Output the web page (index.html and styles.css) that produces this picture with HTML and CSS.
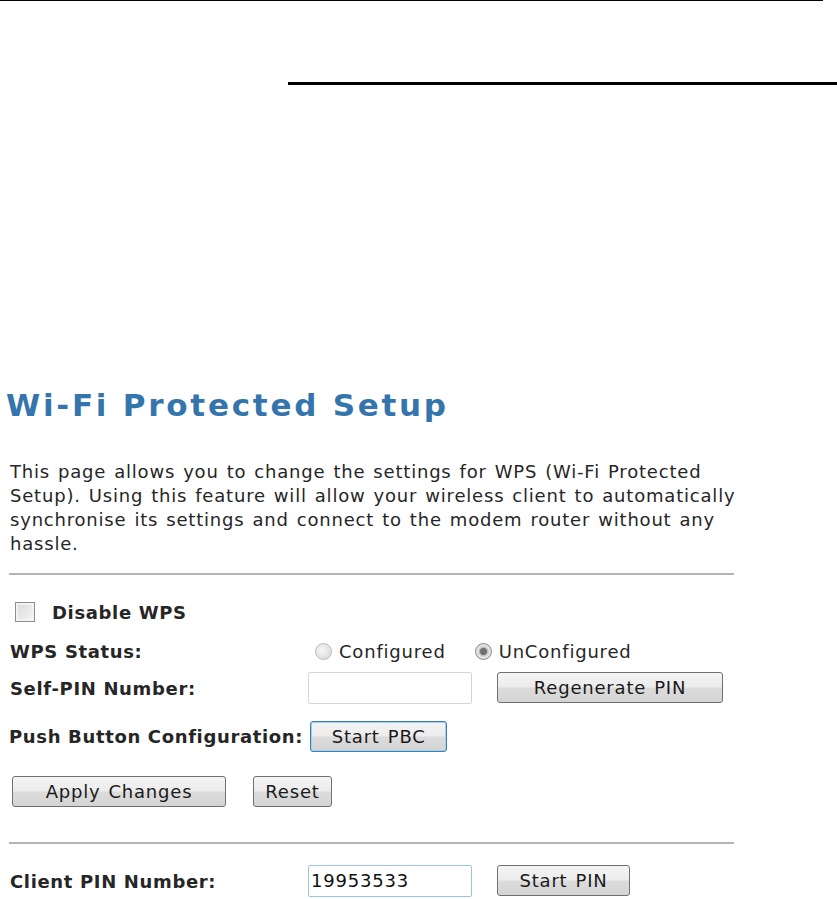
FILE: index.html
```html
<!DOCTYPE html>
<html>
<head>
<meta charset="utf-8">
<link rel="stylesheet" href="styles.css">
</head>
<body>
<div class="topline"></div>
<div class="subline"></div>
<h1 class="title">Wi-Fi Protected Setup</h1>
<p class="intro">This page allows you to change the settings for WPS (Wi-Fi Protected Setup). Using this feature will allow your wireless client to automatically synchronise its settings and connect to the modem router without any hassle.</p>
<div class="rule"></div>
<div class="row row-check">
  <span class="checkbox"></span>
  <span class="bold">Disable WPS</span>
</div>
<div class="row row-status">
  <span class="label">WPS Status:</span>
  <span class="radio"></span><span class="opt">Configured</span>
  <span class="radio checked"></span><span class="opt">UnConfigured</span>
</div>
<div class="row row-pin">
  <span class="label">Self-PIN Number:</span>
  <span class="input"></span>
  <span class="btn btn-regen">Regenerate PIN</span>
</div>
<div class="row row-pbc">
  <span class="label-inline">Push Button Configuration:</span>
  <span class="btn btn-pbc">Start PBC</span>
</div>
<div class="row row-apply">
  <span class="btn btn-apply">Apply Changes</span>
  <span class="btn btn-reset">Reset</span>
</div>
<div class="rule rule2"></div>
<div class="row row-client">
  <span class="label">Client PIN Number:</span>
  <span class="input input-focus">19953533</span>
  <span class="btn btn-startpin">Start PIN</span>
</div>
</body>
</html>
```
FILE: styles.css
```css
html, body {
  margin: 0;
  padding: 0;
  background: #fff;
}
body {
  font-family: "DejaVu Sans", Verdana, sans-serif;
  font-size: 18px;
  letter-spacing: 0.8px;
  word-spacing: 1.5px;
  color: #262626;
  width: 837px;
  height: 899px;
  overflow: hidden;
}
.topline {
  width: 823px;
  height: 1px;
  background: #000;
}
.subline {
  margin: 81px 0 0 288px;
  height: 3px;
  background: #000;
}
.title {
  margin: 302px 0 0 6px;
  font-size: 31px;
  line-height: 36px;
  font-weight: bold;
  letter-spacing: 2.75px;
  word-spacing: 0;
  color: #3475ad;
}
.intro {
  margin: 37px 0 0 10px;
  width: 740px;
  line-height: 24px;
}
.rule {
  margin: 17px 0 0 9px;
  width: 725px;
  height: 2px;
  background: #b4b4b4;
}
.row {
  display: flex;
  align-items: center;
  padding-left: 10px;
}
.bold, .label, .label-inline {
  font-weight: bold;
  letter-spacing: 0.65px;
  word-spacing: 0;
}
.label {
  width: 298px;
}
.row-check {
  margin-top: 26px;
  height: 22px;
  padding-left: 15px;
}
.checkbox {
  box-sizing: border-box;
  width: 20px;
  height: 20px;
  border: 1px solid #8e8e8e;
  background: linear-gradient(135deg, #d9d9d9, #f6f6f6);
  box-shadow: inset 0 0 0 2px #f2f2f2;
  margin-right: 17px;
}
.row-status {
  margin-top: 16px;
  height: 24px;
}
.radio {
  width: 15px;
  height: 15px;
  border-radius: 50%;
  border: 1px solid #b9b9b9;
  background: radial-gradient(circle at 40% 40%, #f6f6f6, #d6d6d6);
  margin: 0 7px 0 7px;
}
.radio.checked {
  background: radial-gradient(circle, #6f6f6f 0 3px, #bdbdbd 4px, #e6e6e6 6px, #d6d6d6 8px);
  border-color: #8a8a8a;
  margin-left: 29px;
}
.row-pin {
  margin-top: 9px;
  height: 32px;
}
.input {
  box-sizing: border-box;
  width: 164px;
  height: 32px;
  border: 1px solid #d4d4d4;
  border-radius: 2px;
  padding: 3px 2px 0;
  line-height: 24px;
  color: #111;
}
.input-focus {
  border-color: #9cc4e6;
}
.btn {
  box-sizing: border-box;
  display: flex;
  align-items: center;
  justify-content: center;
  height: 31px;
  border: 1px solid #707070;
  border-radius: 3px;
  background: linear-gradient(#f4f4f4 0%, #ececec 48%, #dcdcdc 52%, #d4d4d4 100%);
  color: #1a1a1a;
  font-size: 18px;
}
.btn-regen {
  width: 226px;
  margin-left: 25px;
  margin-top: -2px;
}
.row-pbc {
  margin-top: 16px;
  height: 32px;
}
.label-inline {
  margin-left: -1px;
}
.btn-pbc {
  width: 137px;
  margin-left: 7px;
  border-color: #3c7fb1;
  box-shadow: inset 0 0 0 1px #9fd0ef;
}
.row-apply {
  margin-top: 23px;
  height: 32px;
}
.btn-apply {
  width: 214px;
  margin-left: 2px;
}
.btn-reset {
  width: 79px;
  margin-left: 27px;
}
.rule2 {
  margin-top: 35px;
}
.row-client {
  margin-top: 20px;
  height: 34px;
}
.btn-startpin {
  width: 133px;
  margin-left: 25px;
  margin-top: -2px;
}
```
